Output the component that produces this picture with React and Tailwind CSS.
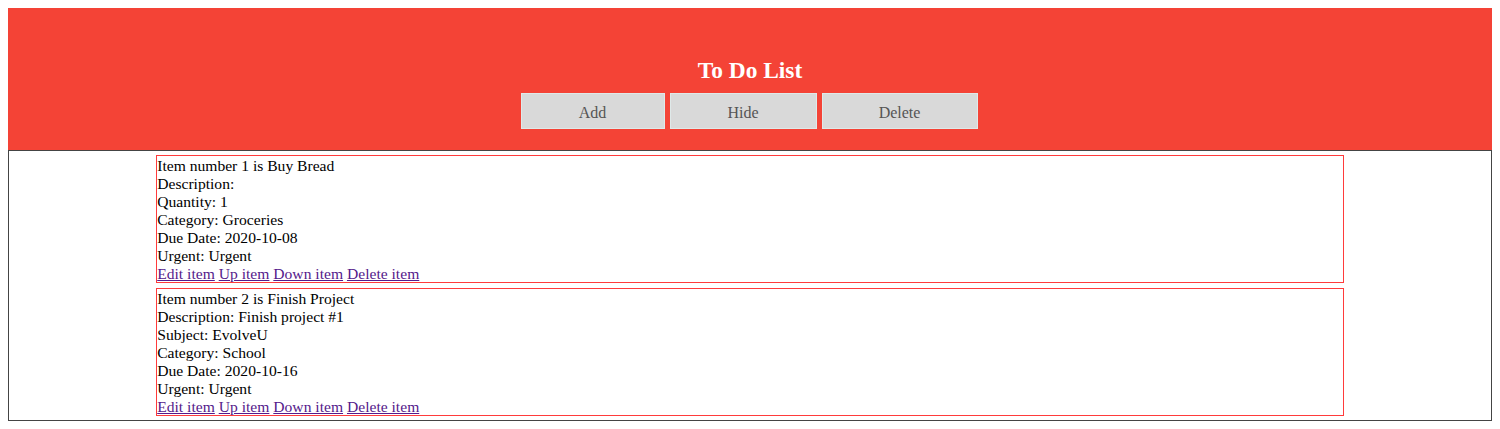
import React from "react";

const items = [
    {
        title: "Item number 1 is Buy Bread",
        lines: ["Description:", "Quantity: 1", "Category: Groceries", "Due Date: 2020-10-08", "Urgent: Urgent"],
    },
    {
        title: "Item number 2 is Finish Project",
        lines: ["Description: Finish project #1", "Subject: EvolveU", "Category: School", "Due Date: 2020-10-16", "Urgent: Urgent"],
    },
];

const actions = ["Edit item", "Up item", "Down item", "Delete item"];

export default function App() {
    return (
        <div className="m-2 font-['Liberation_Serif',serif] text-[15.6px] leading-[18px] text-black">
            <div className="bg-[#f44336] pt-[48px] pb-[21px] flex flex-col items-center">
                <h1 className="text-[23.4px] leading-[28px] font-bold text-white">To Do List</h1>
                <div className="mt-[9px] flex gap-[5px] -translate-x-px">
                    <button className="w-[144px] h-[36px] pt-[3px] bg-[#d9d9d9] border border-[#dfe9e9] text-[16px] text-[#555]">Add</button>
                    <button className="w-[147px] h-[36px] pt-[3px] bg-[#d9d9d9] border border-[#dfe9e9] text-[16px] text-[#555]">Hide</button>
                    <button className="w-[156px] h-[36px] pt-[3px] bg-[#d9d9d9] border border-[#dfe9e9] text-[16px] text-[#555]">Delete</button>
                </div>
            </div>
            <div className="border border-[#444] py-1 flex flex-col gap-[5px]">
                {items.map((item) => (
                    <div key={item.title} className="box-content w-4/5 mx-auto border border-[#ff3b3b] pt-[1px]">
                        <div>{item.title}</div>
                        {item.lines.map((line) => (
                            <div key={line}>{line}</div>
                        ))}
                        <div className="h-[17px]">
                            {actions.map((a, i) => (
                                <React.Fragment key={a}>
                                    {i > 0 && " "}
                                    <a href="#" className="text-[#551a8b] underline">{a}</a>
                                </React.Fragment>
                            ))}
                        </div>
                    </div>
                ))}
            </div>
        </div>
    );
}
